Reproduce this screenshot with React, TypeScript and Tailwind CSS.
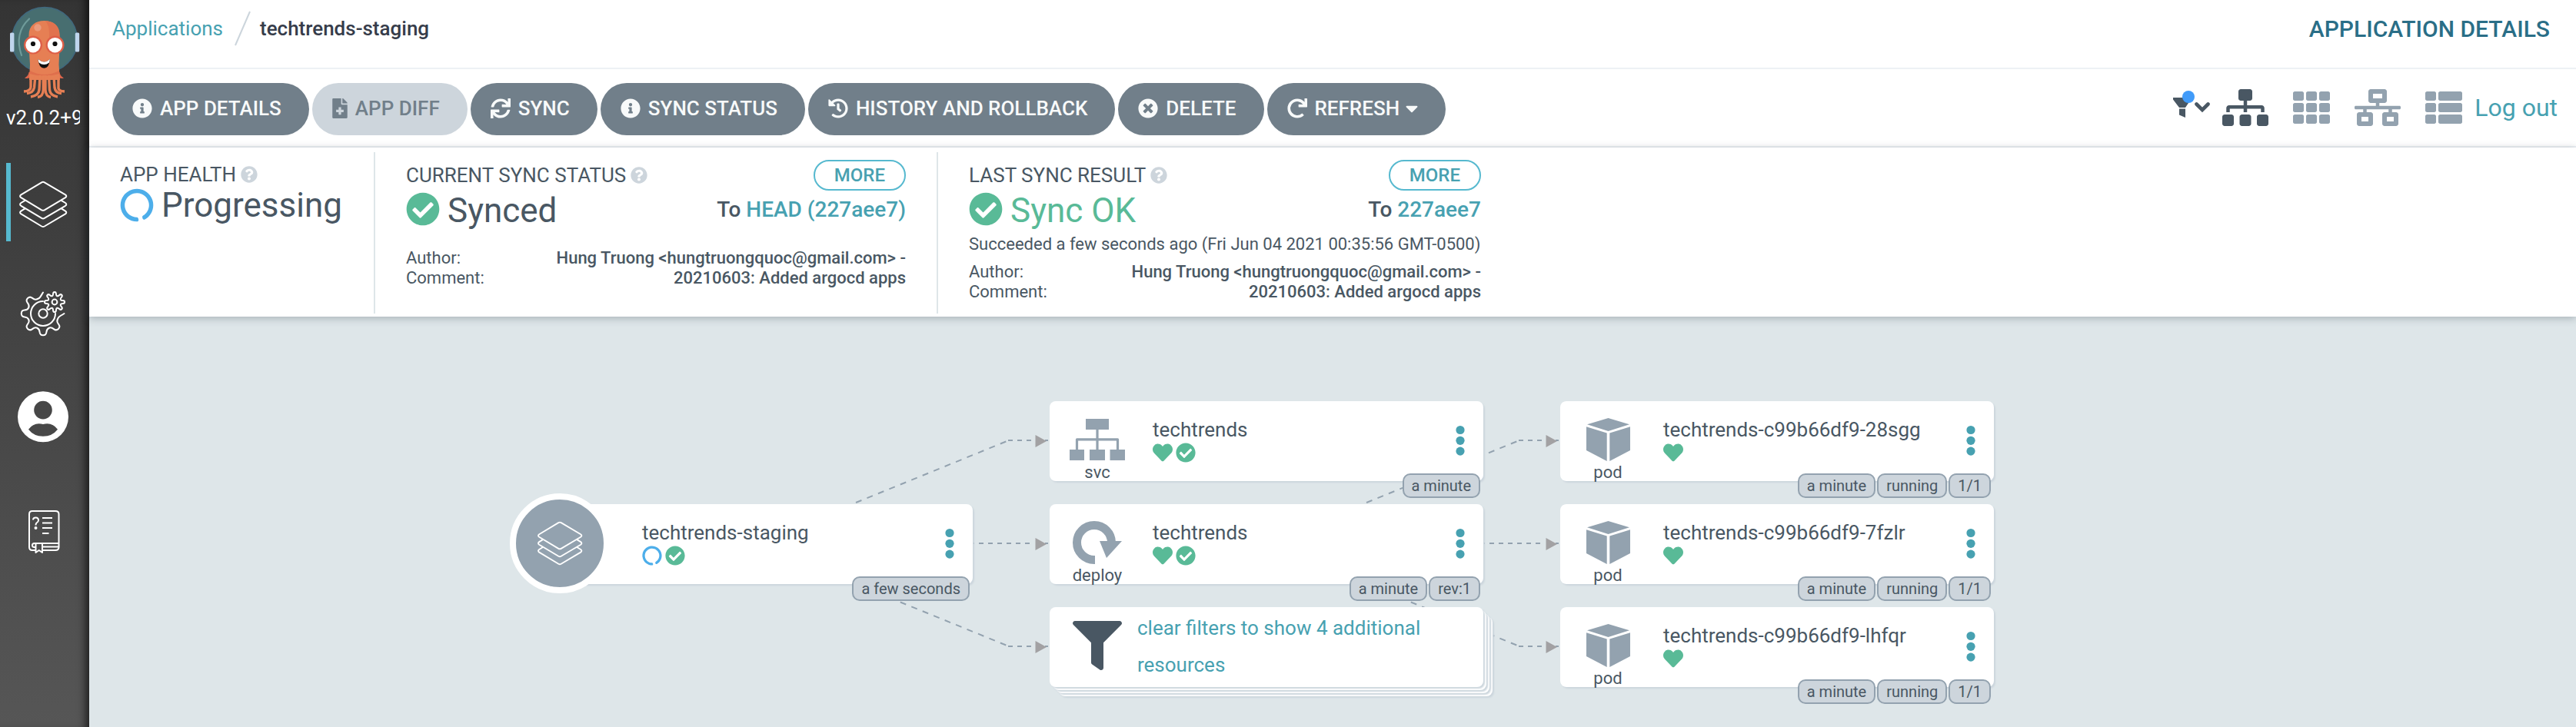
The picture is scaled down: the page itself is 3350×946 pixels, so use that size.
import React from "react";
import {
  FaCaretDown,
  FaCheckCircle,
  FaCircleNotch,
  FaFileMedical,
  FaFilter,
  FaHeart,
  FaHistory,
  FaInfoCircle,
  FaNetworkWired,
  FaQuestionCircle,
  FaRedo,
  FaSitemap,
  FaSync,
  FaTh,
  FaThList,
  FaTimesCircle,
} from "react-icons/fa";

/* ---------- drawings ---------- */

function gearPath(cx: number, cy: number, rv: number, ro: number, teeth: number, from: number, count: number, closed: boolean) {
  const step = 360 / teeth;
  const pts: [number, number][] = [];
  const add = (r: number, deg: number) => {
    const a = (deg * Math.PI) / 180;
    pts.push([cx + r * Math.cos(a), cy + r * Math.sin(a)]);
  };
  for (let i = 0; i < count; i++) {
    const a = from + i * step;
    if (closed || i > 0) add(ro, a - step * 0.18);
    else add(ro - 1, a);
    add(closed || i > 0 ? ro : rv + 2, a + step * 0.18);
    add(rv, a + step * 0.3);
    add(rv, a + step * 0.7);
  }
  if (!closed) {
    add(rv + 2, from + count * step - step * 0.18);
    add(ro - 1, from + count * step);
  }
  const f = (n: number) => n.toFixed(2);
  const mid = (p: [number, number], q: [number, number]) => `${f((p[0] + q[0]) / 2)} ${f((p[1] + q[1]) / 2)}`;
  const n = pts.length;
  if (closed) {
    let d = `M${mid(pts[n - 1], pts[0])}`;
    for (let i = 0; i < n; i++) d += `Q${f(pts[i][0])} ${f(pts[i][1])} ${mid(pts[i], pts[(i + 1) % n])}`;
    return d + "Z";
  }
  let d = `M${f(pts[0][0])} ${f(pts[0][1])}`;
  for (let i = 1; i < n - 1; i++) d += `Q${f(pts[i][0])} ${f(pts[i][1])} ${mid(pts[i], pts[i + 1])}`;
  return d + `L${f(pts[n - 1][0])} ${f(pts[n - 1][1])}`;
}

/* Six gear teeth run from the right edge round to the top; the small gear sits in the gap. */
const bigGear = gearPath(56, 408, 20.5, 28.5, 8, 0, 6, false);
const smallGear = gearPath(71, 393, 8.5, 13.2, 8, 0, 8, true);

function Mascot() {
  return (
    <svg viewBox="0 0 116 132" className="block h-[132px] w-full" aria-hidden="true">
      <circle cx="58" cy="52" r="42.5" fill="#476e70" stroke="#40687e" strokeWidth="1.6" />
      <path d="M38 24.5Q18 43 28 72" fill="none" stroke="#6f9b9a" strokeWidth="2.2" strokeLinecap="round" />
      <rect x="13" y="42.5" width="5.4" height="25" rx="1.6" fill="#bfd5ed" />
      <rect x="97.8" y="42.5" width="5.4" height="25" rx="1.6" fill="#bfd5ed" />
      <path d="M37.5 94Q37 99 32 101.5Q37 103 41 100L75 100Q78 103 83 101.5Q78 99 77.5 94Z" fill="#dd654b" />
      <path d="M37.5 60V46C37.5 33 46 27 57.5 27S77.5 33 77.5 46V60L76.5 84L78 104H38L39 84Z" fill="#e67f54" />
      <path d="M62 27.5Q77.5 30 77.5 46V60H64V43Q64 33 59 27Z" fill="#e1724e" />
      <path d="M39 92Q57.5 102 77 92V96Q57.5 102 38.5 96Z" fill="#df6f4c" />
      <circle cx="49" cy="36" r="4.7" fill="#eb9b7d" />
      <g fill="none" stroke="#e67f54" strokeWidth="3.4">
        <path d="M40 98V113Q40 118.5 31 119" />
        <path d="M46 98L44.5 114Q43 121 35 121.5" />
        <path d="M52 98L51 117Q50 124.5 40 126" />
        <path d="M56.3 98V117Q56 125.5 49 126.5" />
        <path d="M76 98V113Q75 118.5 84 119" />
        <path d="M70 98L71 114Q72 121 80 121.5" />
        <path d="M63.5 98L64.5 117Q65.5 124.5 75 126" />
        <path d="M59 98V117Q59.5 125.5 66 126.5" />
      </g>
      <circle cx="43" cy="58.5" r="12" fill="#de5f48" />
      <circle cx="71.5" cy="58.5" r="12" fill="#de5f48" />
      <circle cx="43" cy="58.7" r="9.7" fill="#fff" />
      <circle cx="71.5" cy="58.7" r="9.7" fill="#fff" />
      <circle cx="43" cy="57" r="3.1" fill="#111" />
      <circle cx="71.5" cy="57" r="3.1" fill="#111" />
      <path d="M49.5 77Q57.5 84 65 77Q64 88.5 57.3 88.7Q50.5 88.5 49.5 77Z" fill="#111" />
      <path d="M49.5 77Q57.5 84 65 77L64 81.5Q57.5 86.5 50.5 81.5Z" fill="#fff" />
    </svg>
  );
}

const layersTop = "M54.2 237.3Q56 236.3 57.8 237.3L85 253.4Q87.6 255.3 85 257.2L57.8 273.3Q56 274.3 54.2 273.3L27.4 257.2Q24.8 255.3 27.4 253.4Z";
const layersMid = "M32.5 260.8L27.4 264Q24.8 265.9 27.4 267.8L54.2 283.9Q56 284.9 57.8 283.9L85 267.8Q87.6 265.9 85 264L79.8 260.8";
const layersLow = "M32.5 271.4L27.4 274.6Q24.8 276.5 27.4 278.4L54.2 294.5Q56 295.5 57.8 294.5L85 278.4Q87.6 276.5 85 274.6L79.8 271.4";

function LayersShape() {
  return (
    <>
      <path d={layersTop} />
      <path d={layersMid} />
      <path d={layersLow} />
    </>
  );
}

const navSvg = "block h-[102px] w-[116px]";

function ServiceGlyph() {
  return (
    <svg viewBox="0 0 72 54" className="h-[54px] w-[72px]" fill="#93a2af" aria-hidden="true">
      <path d="M21 0H51V14H21ZM0 40H19V54H0ZM26 40H46V54H26ZM52.5 40H72V54H52.5Z" />
      <path d="M36 14V40M9.5 40V26.8H62.5V40" fill="none" stroke="#93a2af" strokeWidth="3.2" strokeLinejoin="round" />
    </svg>
  );
}

function DeployGlyph() {
  return (
    <svg viewBox="-4 0 72 56" className="h-[56px] w-[72px]" aria-hidden="true">
      <path d="M29 50.5H28A22.5 22.5 0 1 1 50.5 28V26" fill="none" stroke="#93a2af" strokeWidth="11" />
      <path d="M35 26H64L44 48Z" fill="#93a2af" />
    </svg>
  );
}

function PodGlyph() {
  return (
    <svg viewBox="0 0 57 56" className="h-[56px] w-[57px]" fill="#93a2af" aria-hidden="true">
      <path d="M28.5 0L56 8.3L28.5 17L1 8.3ZM0 11.3L26.7 19.5V56L0 42ZM57 11.3L30.3 19.5V56L57 42Z" />
    </svg>
  );
}

function Kebab() {
  return (
    <button type="button" aria-label="Resource actions" className="flex h-full w-[12px] items-center">
      <svg viewBox="0 0 12 42" className="h-[42px] w-[12px]" fill="#47a1b1">
        <circle cx="6" cy="6.5" r="5.6" />
        <circle cx="6" cy="20.3" r="5.6" />
        <circle cx="6" cy="34.1" r="5.6" />
      </svg>
    </button>
  );
}

/* ---------- sidebar ---------- */

function Sidebar() {
  return (
    <aside className="w-[116px] shrink-0 bg-linear-to-b from-[#343434] to-[#565656]">
      <div className="h-full shadow-[inset_-12px_0_12px_-8px_rgba(0,0,0,0.7)]">
        <Mascot />
        <div className="ml-2 h-10 w-24 overflow-hidden text-[26px] leading-[42px] whitespace-nowrap text-white">v2.0.2+9</div>
        <nav className="flex flex-col gap-10 pt-10">
          <a href="#applications" aria-label="Applications">
            <svg viewBox="0 212 116 102" className={navSvg} fill="none" stroke="#fff" strokeWidth="2" strokeLinejoin="round" strokeLinecap="round">
              <path d="M8 212H14V314H8Z" fill="#56b9cf" stroke="none" />
              <LayersShape />
            </svg>
          </a>
          <a href="#settings" aria-label="Settings">
            <svg viewBox="0 354 116 102" className={navSvg} fill="none" stroke="#fff" strokeWidth="2" strokeLinejoin="round" strokeLinecap="round">
              <path d={bigGear} />
              <path d="M72 408A16 16 0 1 1 56 392" />
              <circle cx="56" cy="408" r="5.7" />
              <path d={smallGear} />
              <circle cx="71" cy="393" r="3.4" />
            </svg>
          </a>
          <a href="#user" aria-label="User info">
            <svg viewBox="0 496 116 102" className={navSvg} fill="#fff">
              <path
                fillRule="evenodd"
                d="M56 509.3A33 33 0 1 1 56 575.3A33 33 0 1 1 56 509.3ZM56 521.8A11.8 11.8 0 1 0 56 545.4A11.8 11.8 0 1 0 56 521.8ZM37 558.8Q44 567.8 56 567.8T75 558.8Q68 549 56 552Q44 549 37 558.8Z"
              />
            </svg>
          </a>
          <a href="#help" aria-label="Documentation">
            <svg viewBox="0 638 116 102" className={navSvg} fill="none" stroke="#fff" strokeWidth="2" strokeLinejoin="round">
              <path d="M46 716H42Q38 716 38 712V669Q38 665 42 665H72Q76.5 665 76.5 669V712Q76.5 716 72 716H55" />
              <path d="M76 707H44.5Q42 707 42 709.5T44.5 712H46M55 711.5H76" />
              <path d="M46.5 707V719L50.7 716L55 719V707" />
              <path d="M55 674H68M55 680.5H68M55 687H68M55 694H63.5" />
              <path d="M43 676.5Q43 673.5 46.5 673.5T50 677Q50 679 47.5 680.5Q46.5 681.3 46.5 683.5" />
              <circle cx="46.5" cy="687" r="1" fill="#fff" />
            </svg>
          </a>
        </nav>
      </div>
    </aside>
  );
}

/* ---------- header and toolbar ---------- */

function Header() {
  return (
    <header className="flex h-[90px] items-center justify-between border-b-2 border-[#edf1f5] pr-[34px] pb-3.5 pl-[30px]">
      <nav className="flex items-center text-[26px]">
        <a href="#applications" className="text-[#47a1b1]">
          Applications
        </a>
        <svg viewBox="0 0 24 46" className="mx-3 h-[46px] w-6" stroke="#ccd5dc" strokeWidth="2" aria-hidden="true">
          <path d="M4 45L23 1" />
        </svg>
        <span className="font-medium text-[#363c4a]">techtrends-staging</span>
      </nav>
      <h1 className="text-[30px] font-medium text-[#2a6e87]">APPLICATION DETAILS</h1>
    </header>
  );
}

type Action = { label: string; icon: React.ReactNode; disabled?: boolean; caret?: boolean };

const actions: Action[] = [
  { label: "APP DETAILS", icon: <FaInfoCircle /> },
  { label: "APP DIFF", icon: <FaFileMedical className="w-5" />, disabled: true },
  { label: "SYNC", icon: <FaSync /> },
  { label: "SYNC STATUS", icon: <FaInfoCircle /> },
  { label: "HISTORY AND ROLLBACK", icon: <FaHistory /> },
  { label: "DELETE", icon: <FaTimesCircle /> },
  { label: "REFRESH", icon: <FaRedo />, caret: true },
];

function Toolbar() {
  return (
    <div className="flex items-center justify-between border-b-2 border-[#edf1f5] pt-[18px] pr-6 pb-3.5 pl-[30px]">
      <div className="flex gap-1">
        {actions.map((a) => (
          <button
            key={a.label}
            type="button"
            disabled={a.disabled}
            className={
              "flex h-[68px] items-center gap-2.5 rounded-full pr-9 pb-0.5 pl-[26px] text-[26px] font-medium whitespace-nowrap " +
              (a.disabled ? "bg-[#cdd5dc] text-[#717f8a]" : "bg-[#717f8a] text-[#f8fafa]")
            }
          >
            {a.icon}
            <span className="flex items-center gap-2">
              {a.label}
              {a.caret && <FaCaretDown className="w-4" />}
            </span>
          </button>
        ))}
      </div>
      <div className="flex items-center pb-1 text-[48px] text-[#93a2af]">
        <button type="button" aria-label="Filter resources" className="relative mr-4 flex items-center gap-1 text-[#495763]">
          <svg viewBox="0 0 24 28" className="h-7 w-6" fill="currentColor" aria-hidden="true">
            <path d="M0 1H24V2L16 14H8L0 3.5ZM8 15.5H16V27L8 23.5Z" />
          </svg>
          <svg viewBox="0 0 20 16" className="h-4 w-5" fill="none" stroke="currentColor" strokeWidth="4.6" strokeLinecap="round" aria-hidden="true">
            <path d="M2.5 3.5L10 11L17.5 3.5" />
          </svg>
          <span className="absolute -top-2 left-3 size-4 rounded-full bg-[#419bf9]" />
        </button>
        <div className="flex items-center gap-8">
          <button type="button" aria-label="Tree view" className="text-[#495763]">
            <FaSitemap className="h-12 w-[60px]" />
          </button>
          <button type="button" aria-label="Pods view">
            <FaTh />
          </button>
          <button type="button" aria-label="Network view">
            <FaNetworkWired className="h-12 w-[60px]" />
          </button>
          <button type="button" aria-label="List view">
            <FaThList />
          </button>
        </div>
        <a href="#logout" className="ml-4 text-[32px] leading-10 text-[#47a1b1]">
          Log out
        </a>
      </div>
    </div>
  );
}

/* ---------- status panel ---------- */

function PanelLabel({ children }: { children: React.ReactNode }) {
  return (
    <h2 className="flex items-center gap-1.5 text-[26px] leading-7">
      {children}
      <FaQuestionCircle className="size-[22px] text-[#cdd5dc]" />
    </h2>
  );
}

function CommitInfo() {
  return (
    <dl className="grid grid-cols-[auto_1fr] text-[22px] leading-[26px]">
      <dt>Author:</dt>
      <dd className="text-right font-medium">Hung Truong &lt;hungtruongquoc@gmail.com&gt; -</dd>
      <dt>Comment:</dt>
      <dd className="text-right font-medium">20210603: Added argocd apps</dd>
    </dl>
  );
}

function SyncHead({ label, state, ok, target }: { label: string; state: string; ok?: boolean; target: string }) {
  return (
    <>
      <div className="flex h-10 items-center justify-between">
        <PanelLabel>{label}</PanelLabel>
        <button type="button" className="h-10 rounded-full border-2 border-[#56b9cf] px-[25px] text-[24px] leading-9 font-medium text-[#47a1b1]">
          MORE
        </button>
      </div>
      <div className="flex justify-between">
        <div className={"flex items-center gap-2.5 text-[44px] leading-[52px] " + (ok ? "text-[#59ba97]" : "")}>
          <FaCheckCircle className="mb-1 text-[#59ba97]" />
          {state}
        </div>
        <div className="text-[28px] leading-[50px] font-medium">
          To{" "}
          <a href="#revision" className="text-[#47a1b1]">
            {target}
          </a>
        </div>
      </div>
    </>
  );
}

function StatusPanel() {
  return (
    <section className="relative z-10 flex bg-white pt-1.5 pb-1 text-[#495763] shadow-[0_2px_10px_rgba(60,75,85,0.35)]">
      <div className="h-[210px] w-[372px] border-r-2 border-[#dee6e9] pt-[15px] pl-10">
        <PanelLabel>APP HEALTH</PanelLabel>
        <div className="flex items-center gap-2.5 text-[44px] leading-[52px]">
          <FaCircleNotch className="rotate-[165deg] text-[#4daeea]" />
          Progressing
        </div>
      </div>
      <div className="w-[732px] border-r-2 border-[#dee6e9] px-10 pt-2.5">
        <SyncHead label="CURRENT SYNC STATUS" state="Synced" target="HEAD (227aee7)" />
        <div className="pt-[23px]">
          <CommitInfo />
        </div>
      </div>
      <div className="w-[746px] px-10 pt-2.5">
        <SyncHead label="LAST SYNC RESULT" state="Sync OK" ok target="227aee7" />
        <p className="mt-[5px] mb-2.5 text-[22px] leading-[26px] whitespace-nowrap">Succeeded a few seconds ago (Fri Jun 04 2021 00:35:56 GMT-0500)</p>
        <CommitInfo />
      </div>
    </section>
  );
}

/* ---------- resource tree ---------- */

const cardClass = "absolute h-[104px] w-[564px] rounded-lg bg-white shadow-[2px_2px_2px_#ccd6dd]";

function Tags({ items }: { items: string[] }) {
  return (
    <div className="absolute right-1 -bottom-[22px] flex gap-0.5">
      {items.map((t) => (
        <span key={t} className="rounded-[10px] border-2 border-[#93a2af] bg-[#cdd5dc] px-2.5 text-[20px] leading-7">
          {t}
        </span>
      ))}
    </div>
  );
}

type NodeProps = {
  place: string;
  name: string;
  tags: string[];
  icon: React.ReactNode;
  kind?: string;
  synced?: boolean;
  progressing?: boolean;
};

function ResourceNode({ place, name, tags, icon, kind, synced, progressing }: NodeProps) {
  return (
    <article className={cardClass + " " + place}>
      <div className="flex h-full pr-6">
        <div className="flex w-[124px] shrink-0 flex-col items-center pt-5">
          <div className="flex h-[60px] shrink-0 items-center justify-center">{icon}</div>
          {kind && <div className="shrink-0 text-[22px] leading-[26px]">{kind}</div>}
        </div>
        <div className="flex-1 pt-5 pl-2.5">
          <h3 className="text-[26px] leading-[34px] whitespace-nowrap">{name}</h3>
          <div className="flex gap-1 text-[26px] text-[#59ba97]">
            {progressing ? <FaCircleNotch className="rotate-[165deg] text-[#4daeea]" /> : <FaHeart />}
            {synced && <FaCheckCircle />}
          </div>
        </div>
        <Kebab />
      </div>
      <Tags items={tags} />
    </article>
  );
}

function RootGlyph() {
  return (
    <div className="absolute -top-[14px] -left-[38px] flex size-[130px] items-center justify-center rounded-full border-8 border-white bg-[#93a2af]">
      <svg viewBox="24 234 64 64" className="size-[60px]" fill="none" stroke="#fff" strokeWidth="2" strokeLinejoin="round" strokeLinecap="round">
        <LayersShape />
      </svg>
    </div>
  );
}

function Edges() {
  return (
    <svg className="absolute top-0 left-0 h-[534px] w-[1920px]" viewBox="116 412 1920 534" fill="none" stroke="#93a2af" strokeWidth="2" aria-hidden="true">
      {[0, 664].map((dx) => (
        <g key={dx} transform={`translate(${dx} 0)`}>
          <path d="M983 707L1312 573M983 707L1312 841" strokeDasharray="8 7.6" />
          <path d="M1311 573H1342M1359 573H1363M1311 841H1342M1359 841H1363M1261 707H1342M1359 707H1363" strokeDasharray="6 6" />
          <path d="M1346.5 566L1361 574L1346.5 582ZM1346.5 700L1361 708L1346.5 716ZM1346.5 834L1361 842L1346.5 850Z" fill="#a2a1a3" stroke="none" />
        </g>
      ))}
    </svg>
  );
}

const podTags = ["a minute", "running", "1/1"];

function ResourceTree() {
  return (
    <main className="relative min-h-[534px] flex-1 overflow-hidden bg-[#dee6e9] text-[#495763]">
      <Edges />
      <ResourceNode place="left-[585px] top-[244px]" name="techtrends-staging" tags={["a few seconds"]} icon={<RootGlyph />} progressing synced />
      <ResourceNode place="left-[1249px] top-[110px]" name="techtrends" kind="svc" tags={["a minute"]} icon={<ServiceGlyph />} synced />
      <ResourceNode place="left-[1249px] top-[244px]" name="techtrends" kind="deploy" tags={["a minute", "rev:1"]} icon={<DeployGlyph />} synced />
      <div className={cardClass + " left-[1261px] top-[390px]"} />
      <div className={cardClass + " left-[1257px] top-[386px]"} />
      <div className={cardClass + " left-[1253px] top-[382px]"} />
      <div className={cardClass + " left-[1249px] top-[378px] flex"}>
        <div className="flex w-[114px] shrink-0 justify-center pt-[18px] pl-2.5">
          <FaFilter className="size-16" />
        </div>
        <button type="button" className="flex-1 self-start pt-[3px] text-left text-[26px] leading-[48px] text-[#47a1b1]">
          clear filters to show 4 additional resources
        </button>
      </div>
      <ResourceNode place="left-[1913px] top-[110px]" name="techtrends-c99b66df9-28sgg" kind="pod" tags={podTags} icon={<PodGlyph />} />
      <ResourceNode place="left-[1913px] top-[244px]" name="techtrends-c99b66df9-7fzlr" kind="pod" tags={podTags} icon={<PodGlyph />} />
      <ResourceNode place="left-[1913px] top-[378px]" name="techtrends-c99b66df9-lhfqr" kind="pod" tags={podTags} icon={<PodGlyph />} />
    </main>
  );
}

export default function App() {
  return (
    <div className="flex min-h-screen bg-white font-['Roboto',sans-serif]">
      <Sidebar />
      <div className="flex min-w-0 flex-1 flex-col">
        <Header />
        <Toolbar />
        <StatusPanel />
        <ResourceTree />
      </div>
    </div>
  );
}
